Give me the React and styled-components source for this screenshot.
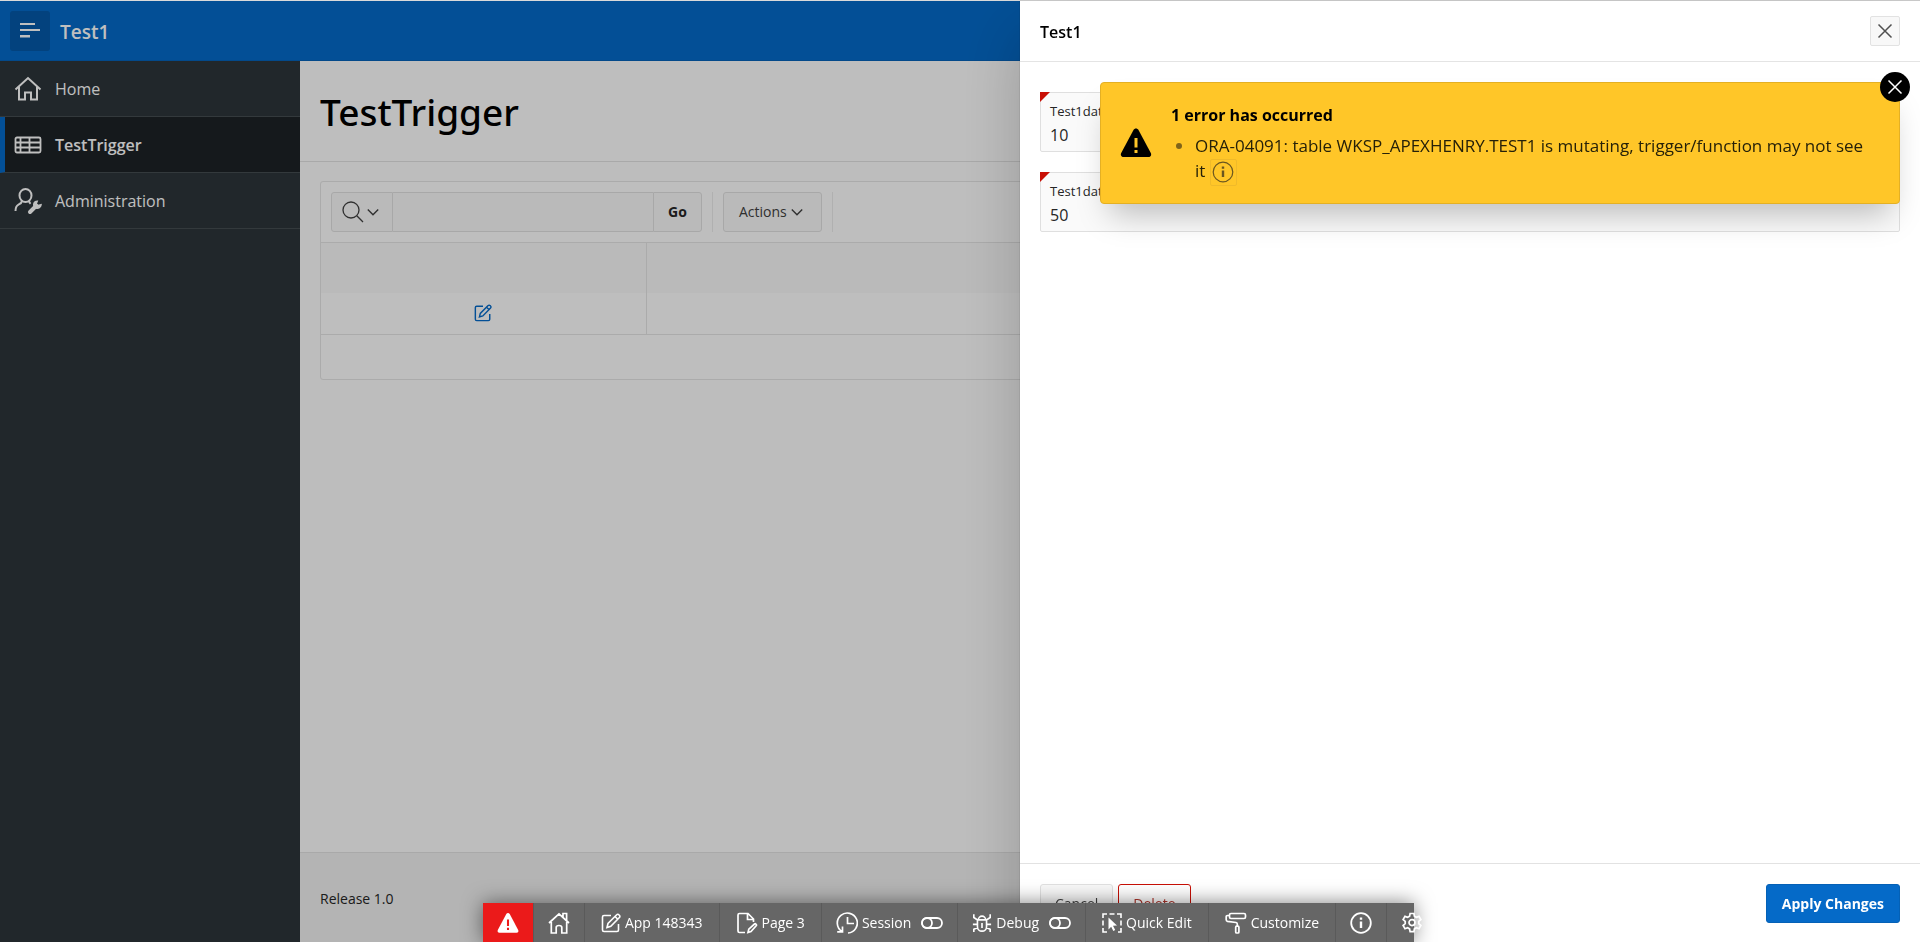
import { styled, createGlobalStyle } from "styled-components"

const GlobalStyle = createGlobalStyle`
    *, *::before, *::after {
        box-sizing: border-box;
    }
    body {
        margin: 0;
        font-family: "Open Sans", "Noto Sans", sans-serif;
        font-size: 14px;
        line-height: 20px;
        color: #262626;
        overflow: hidden;
    }
    button, input {
        font: inherit;
        color: inherit;
    }
`

const HomeIcon = () => (
    <Icon $size={28} viewBox="0 0 28 28" strokeWidth="2">
        <path d="M1.5 14.5 14 3l12.5 11.5M5 12v12.5h6v-7h6v7h6V12" />
    </Icon>
)

const TableIcon = () => (
    <Icon $size={28} viewBox="0 0 28 28" strokeWidth="1.8">
        <rect x="1.5" y="6.5" width="25" height="15" rx="1.5" />
        <path d="M2 11.5h24M2 16.5h24M6.5 7v14M15.5 7v14" />
    </Icon>
)

const AdminIcon = () => (
    <Icon $size={28} viewBox="0 0 28 28" strokeWidth="2">
        <ellipse cx="11.5" cy="8.5" rx="6" ry="6.5" />
        <path d="M8 14c-.3 2-1.5 2.7-3.5 3.7C2.6 18.700 1.5 20 1.5 24M15 14c.2 1.2.7 2 1.6 2.8" />
        <path d="M27 17.8a3.8 3.8 0 0 1-4.8 3.2 3.6 3.6 0 0 1-2.2-4.8c.6-1.2 1.8-2 3.2-2l-1 2.600 2 1.7z" strokeWidth="1.5" fill="currentColor" />
        <path d="M16 25l6-6" strokeWidth="4" strokeLinecap="round" />
    </Icon>
)

const SearchIcon = () => (
    <Icon $size={22} viewBox="0 0 22 22" strokeWidth="1.3">
        <circle cx="9" cy="9" r="8" />
        <path d="M14.8 14.8 21 21" />
    </Icon>
)

const ChevronIcon = () => (
    <Icon $size={12} viewBox="0 0 12 12" strokeWidth="1.4">
        <path d="M.8 3.5 6 8.7l5.2-5.2" />
    </Icon>
)

const EditIcon = ({ size }) => (
    <Icon $size={size} viewBox="0 0 20 20" strokeWidth="1.6">
        <path d="M10 2.500H3A1.5 1.5 0 0 0 1.5 4v13A1.5 1.5 0 0 0 3 18.5h13a1.5 1.5 0 0 0 1.500-1.500v-6" />
        <path d="M6 14.5l1-4 8.700-8.700a1.5 1.5 0 0 1 2.2 0l.5.5a1.5 1.5 0 0 1 0 2.2L9.8 13.3zM14 3.5l2.8 2.8" />
    </Icon>
)

const CloseIcon = () => (
    <Icon $size={16} viewBox="0 0 16 16" strokeWidth="1.5">
        <path d="M1.5 1.5l13 13M14.5 1.5l-13 13" />
    </Icon>
)

const InfoIcon = ({ size, width }) => (
    <Icon $size={size} viewBox="0 0 22 22" strokeWidth={width}>
        <circle cx="11" cy="11" r="9.8" />
        <path d="M11 9.5v6.500M11 5.5v2.2" strokeWidth="2.4" />
    </Icon>
)

const WarningIcon = ({ size, mark }) => (
    <Icon $size={size} viewBox="0 0 32 32">
        <path d="M16 1.5c1 0 1.9.5 2.5 1.5l12.3 23c1 2-.2 4-2.3 4h-25c-2.1 0-3.3-2-2.3-4L13.5 3c.6-1 1.5-1.5 2.5-1.500z" fill="currentColor" stroke="none" />
        <path d="M16 11v9.500M16 23v3" stroke={mark} strokeWidth="3" />
    </Icon>
)

const DevHomeIcon = () => (
    <Icon $size={22} viewBox="0 0 22 22" strokeWidth="1.7">
        <path d="M1 11 11 1.8 21 11M3.3 10v11h4.9v-5.5c0-1.2 1-2 2.8-2s2.8.8 2.8 2V21h4.9V10M15 5.3V1.500h3.600V8.5" />
    </Icon>
)

const PageIcon = () => (
    <Icon $size={22} viewBox="0 0 22 22" strokeWidth="1.7">
        <path d="M9 20.500H3.500A1.5 1.5 0 0 1 2 19V3a1.5 1.5 0 0 1 1.500-1.500h8.500l5.500 5.500v3M11.500 1.500v6h6" />
        <path d="M12 20.500l.8-3.300 5.700-5.200c1-.8 2.600.8 1.700 1.800L15 19.500z" />
    </Icon>
)

const SessionIcon = () => (
    <Icon $size={22} viewBox="0 0 22 22" strokeWidth="1.7">
        <path d="M6 19.500A10 10 0 1 1 12 21M11.500 5v6.500H18M6.500 14.500v5.300H1.200" />
    </Icon>
)

const DebugIcon = () => (
    <Icon $size={20} viewBox="0 0 22 22" strokeWidth="1.8">
        <path d="M6 7.500h10v7.500a5 5 0 0 1-10 0zM7 7.500a4 4 0 0 1 8 0M11 11v5.500M2 1.500v3.500l4.500 3M20 1.500v3.500l-4.500 3M1 12.500h5M16 12.500h5M2 21v-3l4.500-2M20 21v-3l-4.500-2" />
    </Icon>
)

const QuickEditIcon = () => (
    <Icon $size={20} viewBox="0 0 20 20" strokeWidth="1.6">
        <path d="M1 5V1h4M7.500 1h5M15 1h4v4M19 7.500v5M19 15v4h-3M5 19H1v-4M1 12.500v-5" />
        <path d="M6.500 4.500l8.500 8-4 .3 2.200 4.200-1.900 1-2.100-4.200-2.700 2.700z" fill="currentColor" stroke="none" />
    </Icon>
)

const CustomizeIcon = () => (
    <Icon $size={22} viewBox="0 0 22 22" strokeWidth="1.7">
        <rect x="4.500" y="1.500" width="16" height="5" rx="1.500" />
        <path d="M4.500 3.500h-2c-.9 0-1.300.5-1.300 1.300v3c0 .9.400 1.400 1.300 1.600L11 10.500c.9.200 1.300.6 1.300 1.400v2.300" />
        <rect x="10.700" y="14.200" width="3.200" height="6.800" rx="1" />
    </Icon>
)

const ToggleIcon = () => (
    <Icon $size={22} viewBox="0 0 22 22" strokeWidth="1.8">
        <rect x="1" y="6" width="20" height="10" rx="5" />
        <circle cx="6" cy="11" r="5" />
    </Icon>
)

const GearIcon = () => (
    <Icon $size={22} viewBox="0 0 22 22" strokeWidth="1.7">
        <path d="M9.100 1.500h3.800l.5 2.700 2 1.100 2.600-.9 1.900 3.200-2.100 1.800v2.300l2.100 1.800-1.900 3.200-2.600-.9-2 1.100-.5 2.700H9.100l-.5-2.700-2-1.100-2.600.9-1.900-3.200 2.100-1.800V9.400L2.100 7.600 4 4.400l2.600.9 2-1.100z" />
        <circle cx="11" cy="10.600" r="3" />
    </Icon>
)

const navItems = [
    { label: "Home", icon: <HomeIcon /> },
    { label: "TestTrigger", icon: <TableIcon />, active: true },
    { label: "Administration", icon: <AdminIcon /> },
]

const fields = [
    { id: "test1data1", label: "Test1data1", value: "10" },
    { id: "test1data2", label: "Test1data2", value: "50" },
]

const devItems = [
    { name: "Home", icon: <DevHomeIcon /> },
    { name: "App 148343", text: "App 148343", icon: <EditIcon size={20} />, wide: true },
    { name: "Page 3", text: "Page 3", icon: <PageIcon />, wide: true },
    { name: "Session", text: "Session", icon: <SessionIcon />, toggle: true },
    { name: "Debug", text: "Debug", icon: <DebugIcon />, toggle: true },
    { name: "Quick Edit", text: "Quick Edit", icon: <QuickEditIcon />, wide: true },
    { name: "Customize", text: "Customize", icon: <CustomizeIcon />, wide: true },
    { name: "Info", icon: <InfoIcon size={22} width="1.8" /> },
]

const App = () => {
    return (
        <>
            <GlobalStyle />
            <Page>
                <Header>
                    <MenuButton type="button" aria-label="Main navigation">
                        <Icon $size={20} viewBox="0 0 20 20" stroke="none">
                            <path d="M0 2h15v2H0zM0 8h20v2H0zM0 14h10v2.500H0z" fill="currentColor" />
                        </Icon>
                    </MenuButton>
                    <AppName href="#">Test1</AppName>
                </Header>
                <Columns>
                    <SideNav>
                        {navItems.map((item) => (
                            <NavLink key={item.label} href="#" $active={item.active}>
                                {item.icon}
                                {item.label}
                            </NavLink>
                        ))}
                    </SideNav>
                    <Main>
                        <TitleBar>
                            <h1>TestTrigger</h1>
                        </TitleBar>
                        <Content>
                            <Report>
                                <ReportToolbar>
                                    <SearchGroup>
                                        <SearchButton type="button" aria-label="Select columns to search">
                                            <SearchIcon />
                                            <ChevronIcon />
                                        </SearchButton>
                                        <SearchInput type="text" aria-label="Search report" />
                                        <GoButton type="button">Go</GoButton>
                                    </SearchGroup>
                                    <Divider />
                                    <ActionsButton type="button">
                                        Actions
                                        <ChevronIcon />
                                    </ActionsButton>
                                    <Divider />
                                </ReportToolbar>
                                <ReportTable>
                                    <thead>
                                        <tr>
                                            <th></th>
                                            <th></th>
                                        </tr>
                                    </thead>
                                    <tbody>
                                        <tr>
                                            <td>
                                                <EditLink href="#" aria-label="Edit">
                                                    <EditIcon size={18} />
                                                </EditLink>
                                            </td>
                                            <td></td>
                                        </tr>
                                    </tbody>
                                </ReportTable>
                                <ReportFooter />
                            </Report>
                        </Content>
                        <Footer>Release 1.0</Footer>
                    </Main>
                </Columns>
            </Page>
            <Overlay />
            <Dialog role="dialog" aria-labelledby="dialogTitle">
                <DialogHeader>
                    <h2 id="dialogTitle">Test1</h2>
                    <CloseButton type="button" aria-label="Close">
                        <CloseIcon />
                    </CloseButton>
                </DialogHeader>
                <DialogBody>
                    {fields.map((field) => (
                        <Field key={field.id}>
                            <label htmlFor={field.id}>{field.label}</label>
                            <input id={field.id} type="text" defaultValue={field.value} />
                        </Field>
                    ))}
                </DialogBody>
                <DialogFooter>
                    <Button type="button">Cancel</Button>
                    <Button type="button" $kind="danger">Delete</Button>
                    <Spacer />
                    <Button type="button" $kind="hot">Apply Changes</Button>
                </DialogFooter>
                <Alert role="alert">
                    <WarningIcon size={32} mark="#ffc628" />
                    <AlertContent>
                        <h2>1 error has occurred</h2>
                        <ul>
                            <li>
                                ORA-04091: table WKSP_APEXHENRY.TEST1 is mutating, trigger/function may not see it{" "}
                                <DetailsButton type="button" aria-label="Show details">
                                    <InfoIcon size={22} width="1.2" />
                                </DetailsButton>
                            </li>
                        </ul>
                    </AlertContent>
                    <AlertClose type="button" aria-label="Close notification">
                        <CloseIcon />
                    </AlertClose>
                </Alert>
            </Dialog>
            <DevToolbar>
                <DevBar>
                    <ErrorButton type="button" aria-label="Errors">
                        <WarningIcon size={22} mark="#eb1a1a" />
                    </ErrorButton>
                    {devItems.map((item) => (
                        <DevButton key={item.name} type="button" aria-label={item.name} $wide={item.wide}>
                            {item.icon}
                            {item.text}
                            {item.toggle && <Toggle><ToggleIcon /></Toggle>}
                        </DevButton>
                    ))}
                    <SettingsButton type="button" aria-label="Settings">
                        <GearIcon />
                    </SettingsButton>
                </DevBar>
            </DevToolbar>
        </>
    )
}
export default App

const Icon = styled.svg.attrs((props) => ({
    fill: "none",
    stroke: props.stroke || "currentColor",
    "aria-hidden": true,
}))`
    display: block;
    flex: none;
    width: ${(props) => props.$size}px;
    height: ${(props) => props.$size}px;
`

const Page = styled.div`
    display: flex;
    flex-direction: column;
    min-height: 100vh;
    border-top: 1px solid #dadada;
    background: #fcfcfc;
`

const Header = styled.header`
    display: flex;
    align-items: center;
    gap: 10px;
    height: 60px;
    padding: 0 10px;
    background: #056ac8;
    border-bottom: 1px solid #0562b8;
    color: #fff;
`

const MenuButton = styled.button`
    display: flex;
    align-items: center;
    justify-content: center;
    width: 40px;
    height: 40px;
    padding: 0;
    border: none;
    border-radius: 3px;
    background: #0459a8;
    color: #fff;
`

const AppName = styled.a`
    padding-top: 2px;
    font-size: 19px;
    font-weight: 600;
    color: #fff;
    text-decoration: none;
`

const Columns = styled.div`
    display: flex;
    flex: 1;
`

const SideNav = styled.nav`
    flex: none;
    width: 300px;
    background: #2d353a;
`

const NavLink = styled.a`
    display: flex;
    align-items: center;
    gap: 13px;
    height: 56px;
    padding-left: ${(props) => (props.$active ? "9px" : "14px")};
    border-left: ${(props) => (props.$active ? "5px solid #056ac8" : "none")};
    border-bottom: 1px solid #454c51;
    background: ${(props) => (props.$active ? "#1d2226" : "transparent")};
    color: #fff;
    font-size: 16px;
    font-weight: ${(props) => (props.$active ? 600 : 400)};
    text-decoration: none;
`

const Main = styled.main`
    display: flex;
    flex: 1;
    flex-direction: column;
    min-width: 0;
`

const TitleBar = styled.div`
    display: flex;
    align-items: center;
    height: 101px;
    padding: 2px 20px 0;
    background: #fefefe;
    border-bottom: 1px solid #e2e2e2;

    h1 {
        margin: 0;
        font-family: "Noto Sans", "Open Sans", sans-serif;
        font-size: 37px;
        font-weight: 500;
        line-height: 50px;
        color: #000;
    }
`

const Content = styled.div`
    flex: 1;
    padding: 19px 20px;
`

const Report = styled.section`
    background: #fefefe;
    border: 1px solid #e4e4e4;
    border-radius: 3px;
`

const ReportToolbar = styled.div`
    display: flex;
    gap: 10px;
    padding: 10px;
    border-bottom: 1px solid #e4e4e4;
`

const SearchGroup = styled.div`
    display: flex;
    width: 371px;
    height: 40px;
`

const SearchButton = styled.button`
    display: flex;
    align-items: center;
    gap: 3px;
    padding: 0 13px 0 10px;
    border: 1px solid #e0e0e0;
    border-radius: 3px 0 0 3px;
    background: #f8f8f8;
    color: #404040;
`

const SearchInput = styled.input`
    flex: 1;
    min-width: 0;
    border: 1px solid #e0e0e0;
    border-width: 1px 0;
    background: #f9f9f9;
`

const GoButton = styled.button`
    width: 49px;
    padding: 0;
    border: 1px solid #e0e0e0;
    border-radius: 0 3px 3px 0;
    background: #f8f8f8;
    font-weight: 700;
`

const Divider = styled.span`
    width: 1px;
    background: #ebebeb;
`

const ActionsButton = styled.button`
    display: flex;
    align-items: center;
    gap: 4px;
    padding: 0 18px 0 15px;
    border: 1px solid #e0e0e0;
    border-radius: 3px;
    background: #f8f8f8;
    color: #404040;
`

const ReportTable = styled.table`
    width: 100%;
    border-collapse: collapse;
    table-layout: fixed;

    th {
        height: 50px;
        padding: 0;
        background: #f9f9f9;
    }
    td {
        height: 41px;
        padding: 0;
        border-bottom: 1px solid #e4e4e4;
    }
    th:first-child, td:first-child {
        width: 325px;
        border-right: 1px solid #e4e4e4;
    }
`

const EditLink = styled.a`
    display: flex;
    justify-content: center;
    color: #056ac8;
`

const ReportFooter = styled.div`
    height: 44px;
`

const Footer = styled.footer`
    display: flex;
    align-items: center;
    height: 90px;
    padding: 2px 20px 0;
    border-top: 1px solid #e2e2e2;
    background: #f0f0f0;
`

const Overlay = styled.div`
    position: fixed;
    inset: 1px 0 0;
    background: rgba(0, 0, 0, 0.25);
`

const Dialog = styled.div`
    position: fixed;
    inset: 1px 0 0 auto;
    display: flex;
    flex-direction: column;
    width: 900px;
    max-width: 100%;
    background: #fff;
    box-shadow: 0 0 1px rgba(0, 0, 0, 0.4), 0 30px 60px rgba(0, 0, 0, 0.2);
`

const DialogHeader = styled.div`
    display: flex;
    align-items: center;
    justify-content: space-between;
    height: 61px;
    padding: 0 20px;
    border-bottom: 1px solid #e4e4e4;

    h2 {
        margin: 0;
        padding-top: 2px;
        font-size: 16px;
        font-weight: 600;
        color: #000;
    }
`

const CloseButton = styled.button`
    display: flex;
    align-items: center;
    justify-content: center;
    width: 30px;
    height: 30px;
    padding: 0;
    border: 1px solid #e2e2e2;
    border-radius: 2px;
    background: #f8f8f8;
    color: #505050;
`

const DialogBody = styled.div`
    display: flex;
    flex: 1;
    flex-direction: column;
    gap: 20px;
    padding: 30px 20px;
`

const Field = styled.div`
    position: relative;
    display: flex;
    flex-direction: column;
    height: 60px;
    padding: 8px 9px 0;
    border: 1px solid #dfdfdf;
    border-radius: 2px;
    background: #fafafa;

    /* required marker in the corner */
    &::before {
        content: "";
        position: absolute;
        top: -1px;
        left: -1px;
        border-top: 10px solid #c80f05;
        border-right: 10px solid transparent;
    }
    label {
        font-size: 13px;
    }
    input {
        height: 28px;
        padding: 0;
        border: none;
        background: transparent;
        font-size: 16px;
    }
`

const DialogFooter = styled.div`
    display: flex;
    gap: 5px;
    padding: 20px 20px 19px;
    border-top: 1px solid #e2e2e2;
`

const Spacer = styled.span`
    flex: 1;
`

const buttonColors = {
    danger: "border-color: #c80f05; background: #fff; color: #b0352c;",
    hot: "padding: 0 15px; border-color: #0561b6; background: #056ac8; color: #fff; font-weight: 700;",
}

const Button = styled.button`
    height: 39px;
    padding: 0 14px;
    border: 1px solid #e0e0e0;
    border-radius: 3px;
    background: #f8f8f8;
    color: #404040;
    ${(props) => buttonColors[props.$kind]}
`

const Alert = styled.div`
    position: absolute;
    top: 81px;
    right: 20px;
    left: 80px;
    display: flex;
    align-items: center;
    gap: 19px;
    padding: 20px 30px 19px 19px;
    border: 1px solid #e4b024;
    border-radius: 4px;
    background: #ffc628;
    box-shadow: 0 20px 30px -10px rgba(0, 0, 0, 0.25);
    color: #000;
`

const AlertContent = styled.div`
    flex: 1;

    h2 {
        margin: 0 0 5px;
        font-size: 16px;
        font-weight: 700;
        line-height: 25px;
    }
    ul {
        margin: 0;
        padding-left: 24px;
        font-size: 17px;
        line-height: 25px;
        color: #262109;
    }
    li::marker {
        color: #80641a;
    }
`

const DetailsButton = styled.button`
    display: inline-flex;
    align-items: center;
    justify-content: center;
    width: 27px;
    height: 27px;
    margin: -2px 0;
    padding: 0;
    border: 1px solid #f0ba2a;
    border-radius: 2px;
    background: transparent;
    color: #6a5620;
    vertical-align: middle;
`

const AlertClose = styled.button`
    position: absolute;
    top: -11px;
    right: -11px;
    display: flex;
    align-items: center;
    justify-content: center;
    width: 30px;
    height: 30px;
    padding: 0;
    border: none;
    border-radius: 50%;
    background: #000;
    color: #fff;
`

const DevToolbar = styled.div`
    position: fixed;
    inset: auto 0 0;
    display: flex;
    justify-content: center;
`

const DevBar = styled.div`
    display: flex;
    height: 39px;
    margin-right: 23px;
    background: #666;
    box-shadow: 0 0 20px rgba(0, 0, 0, 0.5);
`

const DevButton = styled.button`
    display: flex;
    align-items: center;
    gap: 4px;
    padding: 0 ${(props) => (props.$wide ? "16px" : "14px")};
    border: none;
    border-left: 1px solid #5a5a5a;
    background: transparent;
    color: #fff;
    white-space: nowrap;
`

const ErrorButton = styled(DevButton)`
    border-left: none;
    background: #eb1a1a;
`

/* hangs over the end of the bar */
const SettingsButton = styled(DevButton)`
    width: 28px;
    padding: 0 0 0 14px;
`

const Toggle = styled.span`
    margin-left: 6px;
`
